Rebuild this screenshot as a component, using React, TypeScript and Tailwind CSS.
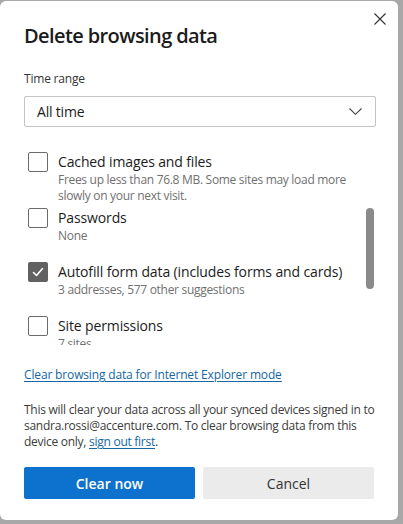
import { useState } from "react";

const font = { fontFamily: '"Segoe UI", "Open Sans", "Noto Sans", sans-serif' };

interface ItemProps {
  title: string;
  lines: string[];
  checked?: boolean;
  onToggle: () => void;
}

const CheckItem = ({ title, lines, checked = false, onToggle }: ItemProps) => (
  <div className="flex gap-[10px] min-h-[54px] py-[2px] pl-[4px]">
    <button
      onClick={onToggle}
      className={
        checked
          ? "w-[20px] h-[20px] shrink-0 rounded-[2px] bg-[#616161] flex items-center justify-center"
          : "w-[20px] h-[20px] shrink-0 rounded-[2px] border border-[#6b6b6b] bg-white"
      }
    >
      {checked && (
        <svg width="14" height="14" viewBox="0 0 14 14" fill="none">
          <path d="M2.5 7.5 L5.5 10.5 L11.5 3.5" stroke="white" strokeWidth="1.6" strokeLinecap="round" strokeLinejoin="round" />
        </svg>
      )}
    </button>
    <div className="flex flex-col">
      <span className="text-[14px] leading-[20px] tracking-[-0.13px] text-[#1b1b1b] whitespace-nowrap">{title}</span>
      <div>
        {lines.map((l) => (
          <div key={l} className="text-[12px] leading-[16px] tracking-[-0.3px] text-[#707070] whitespace-nowrap">
            {l}
          </div>
        ))}
      </div>
    </div>
  </div>
);

const App = () => {
  const [checks, setChecks] = useState([false, false, true, false]);
  const toggle = (i: number) => setChecks(checks.map((c, j) => (j === i ? !c : c)));

  return (
    <div className="w-[403px] h-[524px] bg-[#a8a8a8] pt-px overflow-hidden" style={font}>
      <div className="relative w-[398px] h-[519px] bg-white rounded-[6px] px-[24px] pt-[21px]">
        {/* Close */}
        <button className="absolute top-[12px] right-[12px] w-[12px] h-[12px]">
          <svg width="12" height="12" viewBox="0 0 12 12" fill="none">
            <path d="M0.5 0.5 L11.5 11.5 M11.5 0.5 L0.5 11.5" stroke="#333" strokeWidth="1.1" />
          </svg>
        </button>

        <h1 className="text-[20px] leading-[28px] tracking-[-0.6px] font-semibold text-[#1b1b1b]">Delete browsing data</h1>

        <div className="mt-[19px] text-[12px] leading-[20px] tracking-[-0.2px] text-[#333]">Time range</div>

        <button className="mt-[7px] w-[352px] h-[31px] border border-[#c4c4c4] rounded-[2px] flex items-center justify-between pl-[12px] pr-[13px]">
          <span className="text-[14px] tracking-[-0.2px] text-[#1b1b1b]">All time</span>
          <svg width="13" height="7" viewBox="0 0 13 7" fill="none">
            <path d="M0.5 0.5 L6.5 6.3 L12.5 0.5" stroke="#444" strokeWidth="1.1" />
          </svg>
        </button>

        {/* Scroll area */}
        <div className="relative mt-[14px] h-[204px] overflow-hidden">
          <div className="pt-[9px]">
            <CheckItem
              title="Cached images and files"
              lines={["Frees up less than 76.8 MB. Some sites may load more", "slowly on your next visit."]}
              checked={checks[0]}
              onToggle={() => toggle(0)}
            />
            <CheckItem title="Passwords" lines={["None"]} checked={checks[1]} onToggle={() => toggle(1)} />
            <CheckItem
              title="Autofill form data (includes forms and cards)"
              lines={["3 addresses, 577 other suggestions"]}
              checked={checks[2]}
              onToggle={() => toggle(2)}
            />
            <CheckItem title="Site permissions" lines={["7 sites"]} checked={checks[3]} onToggle={() => toggle(3)} />
          </div>
          <div className="absolute right-[0px] top-[67px] w-[8px] h-[81px] rounded-full bg-[#8a8a8a]" />
        </div>

        <a href="#" className="block mt-[22px] text-[12px] leading-[16px] tracking-[-0.15px] text-[#1467a3] underline underline-offset-2 whitespace-nowrap">
          Clear browsing data for Internet Explorer mode
        </a>

        <p className="mt-[19px] text-[12px] leading-[16px] tracking-[-0.27px] text-[#3b3b3b] whitespace-nowrap">
          This will clear your data across all your synced devices signed in to
          <br />
          sandra.rossi@accenture.com. To clear browsing data from this
          <br />
          device only,{" "}
          <a href="#" className="text-[#1467a3] underline underline-offset-2">
            sign out first
          </a>
          .
        </p>

        <div className="mt-[17px] flex gap-[8px]">
          <button className="w-[172px] h-[32px] rounded-[2px] bg-[#0c72cd] text-white text-[14px] font-semibold">
            Clear now
          </button>
          <button className="w-[172px] h-[32px] rounded-[2px] bg-[#ebebeb] text-[#333] text-[14px] font-medium">
            Cancel
          </button>
        </div>
      </div>
    </div>
  );
};

export default App;
